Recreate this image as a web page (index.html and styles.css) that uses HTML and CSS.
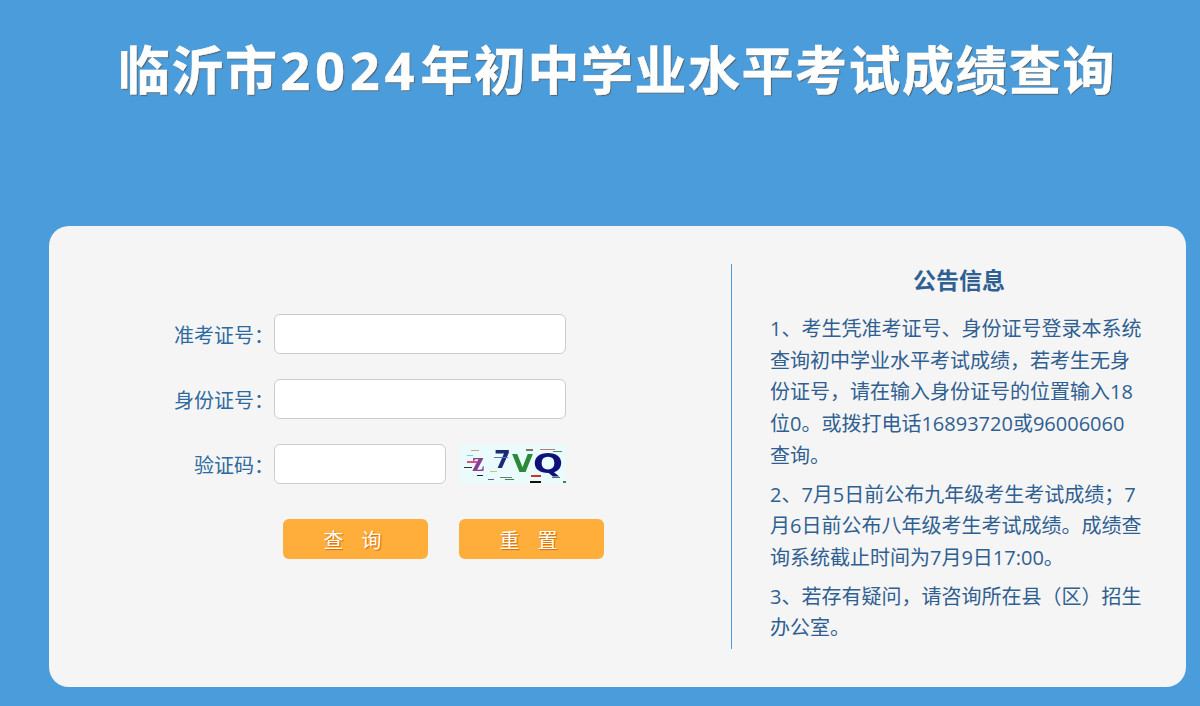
FILE: index.html
```html
<!DOCTYPE html>
<html lang="zh-CN">
<head>
    <meta charset="UTF-8">
    <meta name="viewport" content="width=device-width, initial-scale=1.0">
    <title>临沂市2024年初中学业水平考试成绩查询</title>
    <link rel="stylesheet" href="styles.css">
</head>
<body>

<h1 class="title">临沂市<span class="digits">2024</span>年初中学业水平考试成绩查询</h1>

<div class="card">
    <form class="query">
        <div class="row">
            <label class="label">准考证号：</label>
            <input class="field" type="text">
        </div>
        <div class="row">
            <label class="label">身份证号：</label>
            <input class="field" type="text">
        </div>
        <div class="row">
            <label class="label">验证码：</label>
            <input class="field short" type="text">
            <svg class="captcha" width="106" height="38" viewBox="0 0 106 38">
                <rect width="106" height="38" fill="#eafbfb"/>
                <text x="12" y="26" class="c c1">z</text>
                <text x="34" y="23" class="c c2">7</text>
                <text x="52" y="27" class="c c3" textLength="21" lengthAdjust="spacingAndGlyphs">V</text>
                <text x="73" y="28" class="c c4" textLength="30" lengthAdjust="spacingAndGlyphs">Q</text>
                <rect x="11" y="5" width="8" height="1" fill="#c9a38c"/>
                <rect x="7" y="10" width="6" height="1" fill="#7fd0c8"/>
                <rect x="7" y="16" width="10" height="2" fill="#d8527a"/>
                <rect x="4" y="22" width="8" height="1" fill="#333"/>
                <rect x="17" y="30" width="6" height="1" fill="#222"/>
                <rect x="30" y="26" width="7" height="1" fill="#c9c08c"/>
                <rect x="28" y="34" width="6" height="1" fill="#6a5a9a"/>
                <rect x="34" y="12" width="14" height="1" fill="#5a78c8"/>
                <rect x="40" y="32" width="12" height="1" fill="#777"/>
                <rect x="45" y="34" width="9" height="1" fill="#385"/>
                <rect x="66" y="4" width="7" height="2" fill="#776"/>
                <rect x="80" y="4" width="15" height="1" fill="#b77"/>
                <rect x="93" y="6" width="9" height="1" fill="#4a8a5a"/>
                <rect x="71" y="30" width="10" height="2" fill="#c33"/>
                <rect x="70" y="36" width="11" height="2" fill="#111"/>
                <rect x="92" y="32" width="8" height="1" fill="#666"/>
                <rect x="103" y="36" width="3" height="2" fill="#385"/>
            </svg>
        </div>
        <div class="actions">
            <button class="btn" type="button">查 询</button>
            <button class="btn" type="button">重 置</button>
        </div>
    </form>

    <div class="notice">
        <h2>公告信息</h2>
        <p>1、考生凭准考证号、身份证号登录本系统查询初中学业水平考试成绩，若考生无身份证号，请在输入身份证号的位置输入18位0。或拨打电话16893720或96006060查询。</p>
        <p>2、7月5日前公布九年级考生考试成绩；7月6日前公布八年级考生考试成绩。成绩查询系统截止时间为7月9日17:00。</p>
        <p>3、若存有疑问，请咨询所在县（区）招生办公室。</p>
    </div>
</div>

</body>
</html>
```
FILE: styles.css
```css
body {
    font-family: "Open Sans", "Noto Sans CJK SC", sans-serif;
    background-color: #4b9cda;
    margin: 0;
    height: 706px;
    overflow: hidden;
}
.title {
    margin: 0;
    height: 226px;
    padding: 31px 0 0 118px;
    box-sizing: border-box;
    font-size: 52px;
    line-height: 78px;
    font-weight: 700;
    letter-spacing: 1.5px;
    color: #fff;
    -webkit-text-stroke: 0.5px #fff;
    text-shadow: 1px 1px 1px #555;
}
.digits {
    margin: 0 1px 0 2px;
    letter-spacing: 5px;
}
.card {
    display: flex;
    width: 1137px;
    height: 461px;
    margin-left: 49px;
    padding: 38px 0;
    box-sizing: border-box;
    background: #f5f5f5;
    border-radius: 20px;
}
.query {
    width: 683px;
    height: 385px;
    padding-top: 50px;
    box-sizing: border-box;
    border-right: 1px solid #4b9cda;
}
.row {
    display: flex;
    align-items: center;
    height: 40px;
    margin-bottom: 25px;
}
.label {
    width: 225px;
    text-align: right;
    font-size: 20px;
    color: #2d6a9f;
}
.field {
    width: 292px;
    height: 40px;
    box-sizing: border-box;
    background: #fff;
    border: 1px solid #ccc;
    border-radius: 6px;
}
.field.short {
    width: 172px;
}
.captcha {
    margin-left: 14px;
    filter: blur(0.5px);
}
.c {
    font-family: "DejaVu Sans", sans-serif;
    font-weight: 700;
}
.c1 { font-family: "Liberation Serif", serif; font-size: 28px; fill: #8a3f95; }
.c2 { font-size: 24px; fill: #1c2a78; }
.c3 { font-size: 25px; fill: #2a8a3a; }
.c4 { font-size: 27px; fill: #10107a; }
.actions {
    display: flex;
    gap: 31px;
    padding-left: 234px;
    margin-top: 35px;
}
.btn {
    width: 145px;
    height: 40px;
    padding: 0 6px 0 0;
    background-color: #ffad3b;
    color: #fff;
    border: none;
    border-radius: 6px;
    font-family: inherit;
    font-size: 20px;
    word-spacing: 13px;
    text-shadow: 1px 1px 1px #d96a00;
}
.notice {
    width: 374px;
    margin-left: 38px;
    color: #2f6091;
    font-size: 20px;
    line-height: 31.7px;
}
.notice h2 {
    margin: -1px 0 16px;
    padding-left: 4px;
    text-align: center;
    font-size: 23px;
    line-height: 34px;
    font-weight: 700;
}
.notice p {
    margin: 0 0 7px;
}
```
